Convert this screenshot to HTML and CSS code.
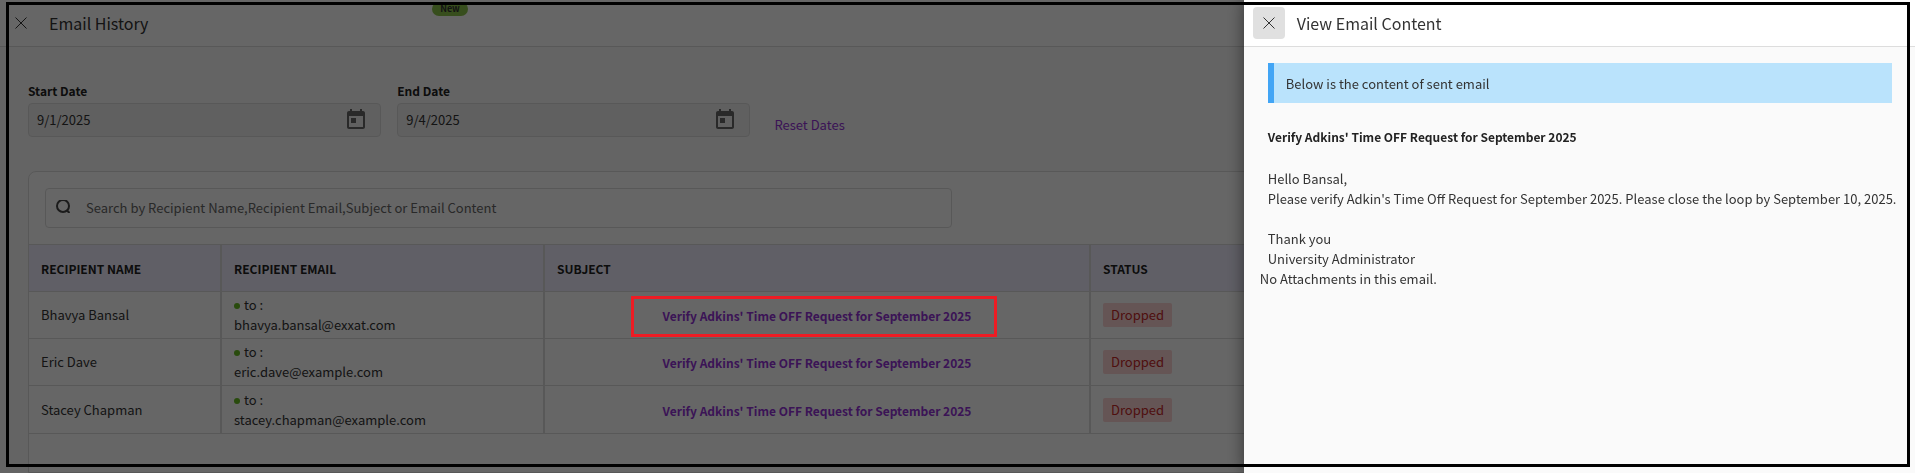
FILE: index.html
```html
<!DOCTYPE html>
<html lang="en">
<head>
    <meta charset="UTF-8">
    <meta name="viewport" content="width=device-width, initial-scale=1">
    <title>Email History</title>
    <link rel="stylesheet" href="styles.css">
</head>
<body>
    <main class="page">
        <header class="page-header">
            <button class="close-btn" aria-label="Close email history">
                <svg width="12" height="12" viewBox="0 0 12 12"><path d="M.5.5l11 11M11.5.5l-11 11"/></svg>
            </button>
            <h1>Email History</h1>
            <span class="new-badge">New</span>
        </header>

        <div class="page-body">
            <form class="filters">
                <div class="field">
                    <label for="start-date">Start Date</label>
                    <div class="date-box">
                        <input id="start-date" type="text" value="9/1/2025">
                        <button type="button" class="calendar-btn" aria-label="Pick start date">
                            <svg width="24" height="24" viewBox="0 0 24 24"><path d="M19 3h-1V1h-2v2H8V1H6v2H5c-1.100 0-2 .9-2 2v14c0 1.100.9 2 2 2h14c1.100 0 2-.9 2-2V5c0-1.100-.9-2-2-2zm0 16H5V8h14v11zM7 10h5v5H7z"/></svg>
                        </button>
                    </div>
                </div>
                <div class="field">
                    <label for="end-date">End Date</label>
                    <div class="date-box">
                        <input id="end-date" type="text" value="9/4/2025">
                        <button type="button" class="calendar-btn" aria-label="Pick end date">
                            <svg width="24" height="24" viewBox="0 0 24 24"><path d="M19 3h-1V1h-2v2H8V1H6v2H5c-1.100 0-2 .9-2 2v14c0 1.100.9 2 2 2h14c1.100 0 2-.9 2-2V5c0-1.100-.9-2-2-2zm0 16H5V8h14v11zM7 10h5v5H7z"/></svg>
                        </button>
                    </div>
                </div>
                <a href="#" class="reset-link">Reset Dates</a>
            </form>

            <section class="card">
                <div class="search-box">
                    <svg width="14" height="13" viewBox="0 0 14 13"><circle cx="7" cy="6" r="6"/><path d="M10.500 10l3 3"/></svg>
                    <input type="text" aria-label="Search emails" placeholder="Search by Recipient Name,Recipient Email,Subject or Email Content">
                </div>

                <table class="email-table">
                    <colgroup>
                        <col class="col-name">
                        <col class="col-email">
                        <col class="col-subject">
                        <col>
                    </colgroup>
                    <thead>
                        <tr>
                            <th>RECIPIENT NAME</th>
                            <th>RECIPIENT EMAIL</th>
                            <th>SUBJECT</th>
                            <th>STATUS</th>
                        </tr>
                    </thead>
                    <tbody>
                        <tr>
                            <td>Bhavya Bansal</td>
                            <td><span class="dot"></span>to :<br>bhavya.bansal@exxat.com</td>
                            <td class="subject">
                                <a href="#">Verify Adkins' Time OFF Request for September 2025</a>
                                <span class="highlight"></span>
                            </td>
                            <td><span class="status">Dropped</span></td>
                        </tr>
                        <tr>
                            <td>Eric Dave</td>
                            <td><span class="dot"></span>to :<br>eric.dave@example.com</td>
                            <td class="subject"><a href="#">Verify Adkins' Time OFF Request for September 2025</a></td>
                            <td><span class="status">Dropped</span></td>
                        </tr>
                        <tr>
                            <td>Stacey Chapman</td>
                            <td><span class="dot"></span>to :<br>stacey.chapman@example.com</td>
                            <td class="subject"><a href="#">Verify Adkins' Time OFF Request for September 2025</a></td>
                            <td><span class="status">Dropped</span></td>
                        </tr>
                    </tbody>
                </table>
            </section>
        </div>
    </main>

    <div class="backdrop"></div>

    <aside class="drawer">
        <header class="drawer-header">
            <button class="close-btn focused" aria-label="Close email content">
                <svg width="12" height="12" viewBox="0 0 12 12"><path d="M.5.5l11 11M11.5.5l-11 11"/></svg>
            </button>
            <h2>View Email Content</h2>
        </header>
        <div class="drawer-body">
            <div class="notice">Below is the content of sent email</div>
            <h3>Verify Adkins' Time OFF Request for September 2025</h3>
            <p>Hello Bansal,<br>Please verify Adkin's Time Off Request for September 2025. Please close the loop by September 10, 2025.</p>
            <p>Thank you<br>University Administrator</p>
        </div>
        <div class="attachments">No Attachments in this email.</div>
    </aside>

    <div class="outline"></div>
</body>
</html>
```

FILE: styles.css
```css
* {
    box-sizing: border-box;
}
html, body {
    margin: 0;
    padding: 0;
    height: 100%;
}
body {
    overflow: hidden;
    background: #fafafa;
    color: #333;
    font-family: "Noto Sans CJK SC", "Noto Sans", sans-serif;
    font-size: 13px;
    line-height: 20px;
}
h1, h2, h3, p {
    margin: 0;
}
input, button {
    font: inherit;
    color: inherit;
}
a {
    color: #9333d6;
    text-decoration: none;
}

/* page */
.page {
    display: flex;
    flex-direction: column;
    min-height: 100vh;
}
.page-header, .drawer-header {
    display: flex;
    align-items: center;
    gap: 12px;
    height: 47px;
    padding-left: 5px;
    background: #fff;
    border-bottom: 1px solid #ddd;
}
.page-header h1, .drawer-header h2 {
    font-size: 16px;
    font-weight: 400;
    line-height: 24px;
}
.close-btn {
    display: flex;
    align-items: center;
    justify-content: center;
    width: 32px;
    height: 32px;
    padding: 0;
    background: none;
    border: none;
    border-radius: 4px;
    cursor: pointer;
}
.close-btn.focused {
    background: #e0e0e0;
}
.close-btn svg {
    fill: none;
    stroke: #333;
}
.new-badge {
    position: absolute;
    top: 2px;
    left: 432px;
    width: 36px;
    height: 14px;
    background: #8bc34a;
    border-radius: 7px;
    font-size: 9px;
    font-weight: 700;
    line-height: 14px;
    text-align: center;
}
.page-body {
    display: flex;
    flex: 1;
    flex-direction: column;
    gap: 34px;
    padding: 33px 28px 0;
}

/* filters */
.filters {
    display: flex;
    gap: 16px;
}
.field {
    width: 19%;
}
.field label {
    display: block;
    margin-bottom: 1px;
    color: #222;
    font-size: 12px;
    font-weight: 700;
    line-height: 22px;
}
.date-box {
    display: flex;
    align-items: center;
    height: 34px;
    padding: 0 12px 0 8px;
    background: #f0f0f0;
    border: 1px solid #ddd;
    border-radius: 4px;
}
.date-box input {
    flex: 1;
    min-width: 0;
    padding: 0;
    background: none;
    border: none;
    outline: none;
}
.calendar-btn {
    display: flex;
    padding: 0;
    background: none;
    border: none;
    cursor: pointer;
}
.calendar-btn svg {
    fill: #666;
}
.reset-link {
    align-self: flex-end;
    margin-left: 8px;
    margin-bottom: 2px;
}

/* card */
.card {
    flex: 1;
    background: #fff;
    border: 1px solid #ddd;
    border-radius: 8px 8px 0 0;
}
.search-box {
    display: flex;
    align-items: center;
    gap: 16px;
    width: calc(50% - 22px);
    height: 40px;
    margin: 16px;
    padding: 0 10px;
    border: 1px solid #ddd;
    border-radius: 4px;
}
.search-box svg {
    margin-bottom: 4px;
    fill: none;
    stroke: #444;
    stroke-width: 2;
}
.search-box input {
    flex: 1;
    padding: 0;
    background: none;
    border: none;
    outline: none;
}
.search-box input::placeholder {
    color: #666;
}

/* table */
.email-table {
    width: 100%;
    table-layout: fixed;
    border-collapse: separate;
    border-spacing: 0;
}
.col-name {
    width: 193px;
}
.col-email {
    width: 323px;
}
.col-subject {
    width: 546px;
}
.email-table th, .email-table td {
    padding: 3px 12px;
    border-right: 2px solid #ddd;
    border-bottom: 1px solid #ddd;
    text-align: left;
}
.email-table th {
    height: 48px;
    padding-top: 5px;
    background: #f0eeff;
    border-top: 1px solid #ddd;
    color: #222;
    font-size: 12px;
    font-weight: 700;
}
.email-table tr:last-child td {
    height: 48px;
}
.email-table .subject {
    position: relative;
    padding-top: 5px;
    font-size: 12px;
    font-weight: 700;
    text-align: center;
}
.highlight {
    position: absolute;
    z-index: 20;
    top: 4px;
    right: 92px;
    bottom: 1px;
    left: 86px;
    border: 3px solid #ed1c24;
    pointer-events: none;
}
.dot {
    display: inline-block;
    width: 6px;
    height: 6px;
    margin-right: 4px;
    background: #6b2;
    border-radius: 50%;
    vertical-align: 1px;
}
.status {
    display: inline-block;
    padding: 2px 8px;
    background: #fcd4d4;
    border-radius: 2px;
    color: #c62828;
}

.backdrop {
    position: fixed;
    z-index: 10;
    inset: 0;
    background: rgba(0,0,0,0.6);
}

/* drawer */
.drawer {
    position: fixed;
    z-index: 30;
    top: 0;
    right: 0;
    bottom: 0;
    width: calc(35% + 1px);
    background: #fafafa;
    box-shadow: 0 0 16px rgba(0,0,0,0.5);
}
.drawer-header {
    padding-left: 9px;
}
.drawer-body {
    padding: 16px 12px 0 24px;
}
.notice {
    margin-right: 11px;
    padding: 11px 12px 9px;
    background: #bae3fc;
    border-left: 6px solid #42a5f5;
}
.drawer-body h3 {
    margin: 24px 0 22px;
    color: #222;
    font-size: 12px;
    font-weight: 700;
    line-height: 20px;
}
.drawer-body p + p {
    margin-top: 20px;
}
.attachments {
    padding-left: 16px;
}

/* frame drawn round the whole screen */
.outline {
    position: fixed;
    z-index: 40;
    inset: 2px 5px 6px 6px;
    border: 3px solid #000;
    pointer-events: none;
}
```
